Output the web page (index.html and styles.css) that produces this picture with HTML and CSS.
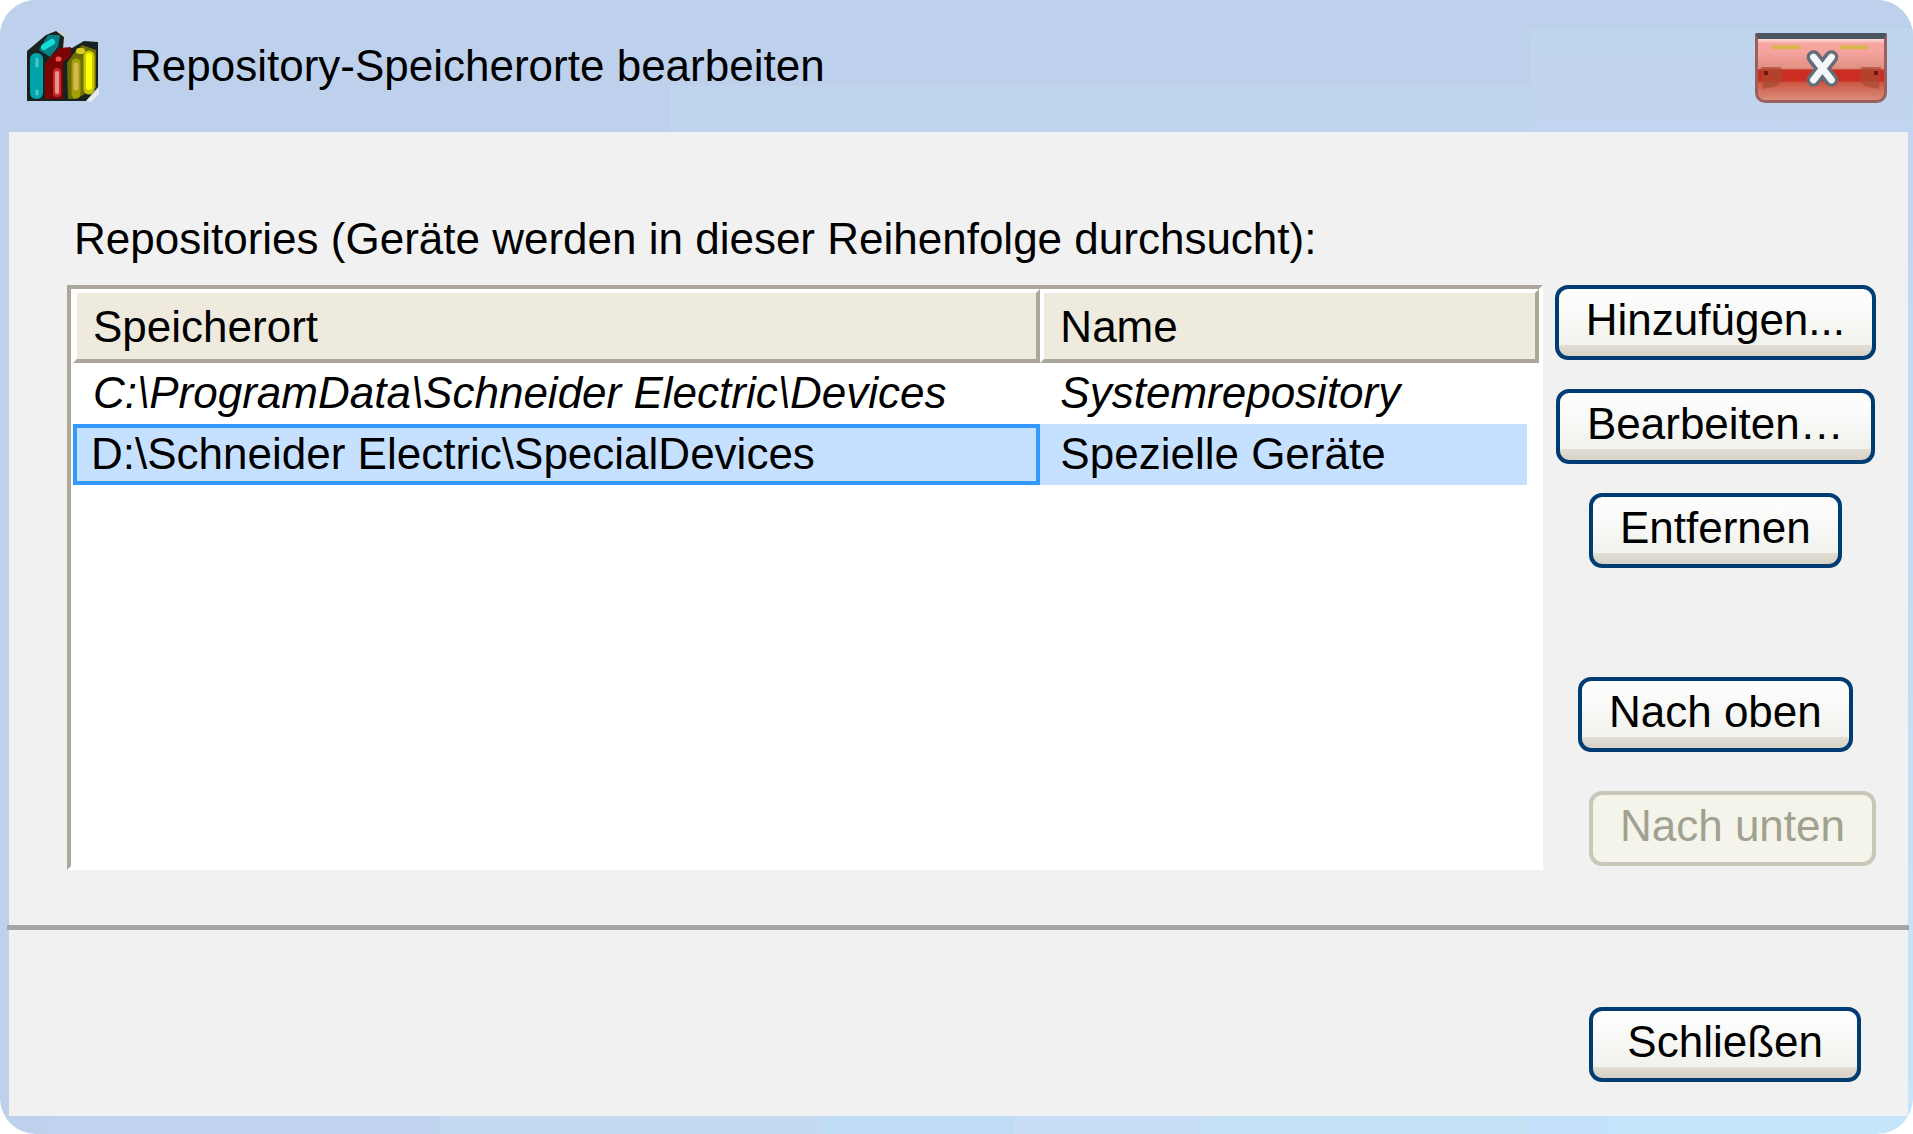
FILE: index.html
```html
<!DOCTYPE html>
<html lang="de">
<head>
<meta charset="utf-8">
<title>Repository-Speicherorte bearbeiten</title>
<link rel="stylesheet" href="styles.css">
</head>
<body>
<main class="dialog">
  <header class="titlebar">
    <svg class="app-icon" viewBox="0 0 76 76" aria-hidden="true">
      <path d="M60 73L73 60V66L65 74Z" fill="#e8eaee"/>
      <path d="M34 3L40 9L38 14L28 4Z" fill="#d9cfc6"/>
      <path d="M1 23L20 7L30 3L38 9L37 21L46 20L58 13L72 14V59L60 73H1Z" fill="#18231f"/>
      <path d="M13 22L22 7L34 7L32 19L24 29Z" fill="#067f86"/>
      <path d="M18 19L26 14" stroke="#12ded8" stroke-width="6" stroke-linecap="round"/>
      <rect x="4" y="25" width="13" height="46" rx="6" fill="#00a4a8"/>
      <path d="M11 31V38M11 63V66" stroke="#4ccaca" stroke-width="3" stroke-linecap="round"/>
      <path d="M19 71V36L27 26L34 20L45 19L45 28L37 34V71Z" fill="#7b0505"/>
      <path d="M31 44V65" stroke="#c92a2a" stroke-width="8" stroke-linecap="round"/>
      <path d="M31 45V64" stroke="#ee9090" stroke-width="4" stroke-linecap="round"/>
      <path d="M32 31h1" stroke="#f05050" stroke-width="5" stroke-linecap="round"/>
      <path d="M41 35L48 25L56 17L70 22V60L57 67L50 71H42Z" fill="#6d6d05"/>
      <path d="M50 35V66" stroke="#a0a008" stroke-width="9" stroke-linecap="round"/>
      <path d="M50 37V60" stroke="#d9b553" stroke-width="5" stroke-linecap="round"/>
      <path d="M63 28V61" stroke="#c6c606" stroke-width="11" stroke-linecap="round"/>
      <path d="M63 28V59" stroke="#ffff08" stroke-width="6" stroke-linecap="round"/>
      <path d="M53 23h3" stroke="#dccb2a" stroke-width="6" stroke-linecap="round"/>
    </svg>
    <h1 class="title">Repository-Speicherorte bearbeiten</h1>
    <button class="close" type="button" aria-label="Fenster schließen">
      <svg viewBox="0 0 127 61" aria-hidden="true">
        <path d="M15 6h28v4H15zM83 6h28v4H83z" fill="#d8b54c"/>
        <path d="M3 28h20q5 12-5 20L5 50ZM124 28h-20q-5 12 5 20L122 50Z" fill="#a84a31" opacity=".7"/>
        <path d="M6 32h4v4H6zM117 32h4v4h-4z" fill="#741512"/>
        <path d="M56 18L74 41M74 18L56 41" stroke="#666d78" stroke-width="14" stroke-linecap="round"/>
        <path d="M56 18L74 41M74 18L56 41" stroke="#f4f8fa" stroke-width="7" stroke-linecap="round"/>
      </svg>
    </button>
  </header>
  <div class="panel">
    <h2 class="label" id="repo-label">Repositories (Geräte werden in dieser Reihenfolge durchsucht):</h2>
    <section class="content">
      <div class="list">
        <table aria-labelledby="repo-label">
          <thead><tr><th class="location">Speicherort</th><th>Name</th></tr></thead>
          <tbody>
            <tr class="system"><td>C:\ProgramData\Schneider Electric\Devices</td><td>Systemrepository</td></tr>
            <tr class="selected"><td class="focused">D:\Schneider Electric\SpecialDevices</td><td class="rest">Spezielle Geräte</td></tr>
          </tbody>
        </table>
      </div>
      <div class="actions">
        <div class="group edit">
          <button class="btn" type="button">Hinzufügen...</button>
          <button class="btn" type="button">Bearbeiten…</button>
          <button class="btn" type="button">Entfernen</button>
        </div>
        <div class="group move">
          <button class="btn" type="button">Nach oben</button>
          <button class="btn last" type="button" disabled>Nach unten</button>
        </div>
      </div>
    </section>
    <footer class="footer">
      <button class="btn wide" type="button">Schließen</button>
    </footer>
  </div>
</main>
</body>
</html>
```
FILE: styles.css
```css
* { box-sizing: border-box; }
html { background: #fff; }
body {
  margin: 0;
  font-family: "Liberation Sans", Arial, sans-serif;
  font-size: 44px;
  line-height: 50px;
  color: #000;
}
.dialog {
  display: flex;
  flex-direction: column;
  min-height: 100vh;
  padding: 0 5px 18px 9px;
  border-radius: 36px;
  background:
    linear-gradient(#c1d5f0, #c3ddf5 60%, #c5e5fa) right / 5px 100% no-repeat,
    linear-gradient(90deg, #bdd1ed 2%, #c0d4ef 3% 23%, #c3daf1 23% 43%, #c0ddf5 43% 53%, #c7def6 53% 63%, #c5e1f6 63% 80%, #c5e0fa 80% 84%, #c5e5fa 84%);
  overflow: hidden;
}
.titlebar {
  display: flex;
  align-items: center;
  height: 132px;
  margin: 0 -5px 0 -9px;
  padding: 0 26px;
  background:
    linear-gradient(#bed5ed, #c1d4ee 40%, #c1d5f0) right bottom / 20% 104px no-repeat,
    linear-gradient(#bed5ed, #bed5ed) right bottom / 65% 46px no-repeat,
    #bdd1ed;
}
.app-icon { width: 76px; height: 76px; }
.title {
  flex: 1;
  margin: 0 0 0 28px;
  font-size: 44px;
  font-weight: 400;
}
.close {
  width: 132px;
  height: 70px;
  margin-top: 4px;
  padding: 0;
  border: 3px solid #99605d;
  border-top: 6px solid #4c5660;
  border-radius: 2px 2px 10px 10px;
  background: linear-gradient(#fbdcda, #f6a49e 8% 20%, #e19084 48%, #cb2d22 51% 68%, #cb5a45 72%, #dc8a7a);
}
.close svg { display: block; width: 100%; height: 61px; }
.panel {
  flex: 1;
  display: flex;
  flex-direction: column;
  background: #f1f1f1;
}
.label {
  margin: 82px 0 21px 65px;
  font-size: 44px;
  font-weight: 400;
}
.content {
  display: flex;
  flex: 1;
  gap: 12px;
  padding: 0 32px 55px 58px;
}
.list {
  flex: 1;
  padding-left: 2px;
  border: 4px solid;
  border-color: #aca899 #fff #fff #aca899;
  background: #fff;
}
table {
  width: 100%;
  table-layout: fixed;
  border-collapse: separate;
  border-spacing: 0;
}
th {
  height: 74px;
  padding: 2px 16px 0;
  border: 4px solid;
  border-color: #fff #aca899 #aca899 #fff;
  background: #eeeadd;
  font-weight: 400;
  text-align: left;
}
.location { width: 66%; }
td { height: 61px; padding: 0 20px 2px; white-space: nowrap; }
.system { font-style: italic; }
.focused { border: 4px solid #3399ff; padding: 0 14px 2px; }
.selected td { background-color: #c6e1ff; }
.selected .rest { border-right: 12px solid #fff; }
.actions {
  display: flex;
  flex-direction: column;
  justify-content: space-between;
  padding-bottom: 4px;
}
.group { display: flex; flex-direction: column; align-items: center; }
.edit { gap: 29px; }
.move { gap: 39px; }
.btn {
  height: 75px;
  padding: 0 27px 6px;
  border: 4px solid #003c74;
  border-radius: 13px;
  background: linear-gradient(#fff, #fafaf9 30%, #f1f1ed 83%, #e3ded4 84%, #d6d0c5);
  font: inherit;
  color: #000;
}
.btn:disabled {
  border-color: #c9c7ba;
  background: #f5f4ea;
  color: #a1a192;
}
.last { align-self: flex-end; }
.wide { padding: 0 34px 6px; }
.footer {
  display: flex;
  justify-content: flex-end;
  margin: 0 -1px 0 -2px;
  padding: 77px 48px 34px;
  border-top: 5px solid #a5a5a5;
}
```
